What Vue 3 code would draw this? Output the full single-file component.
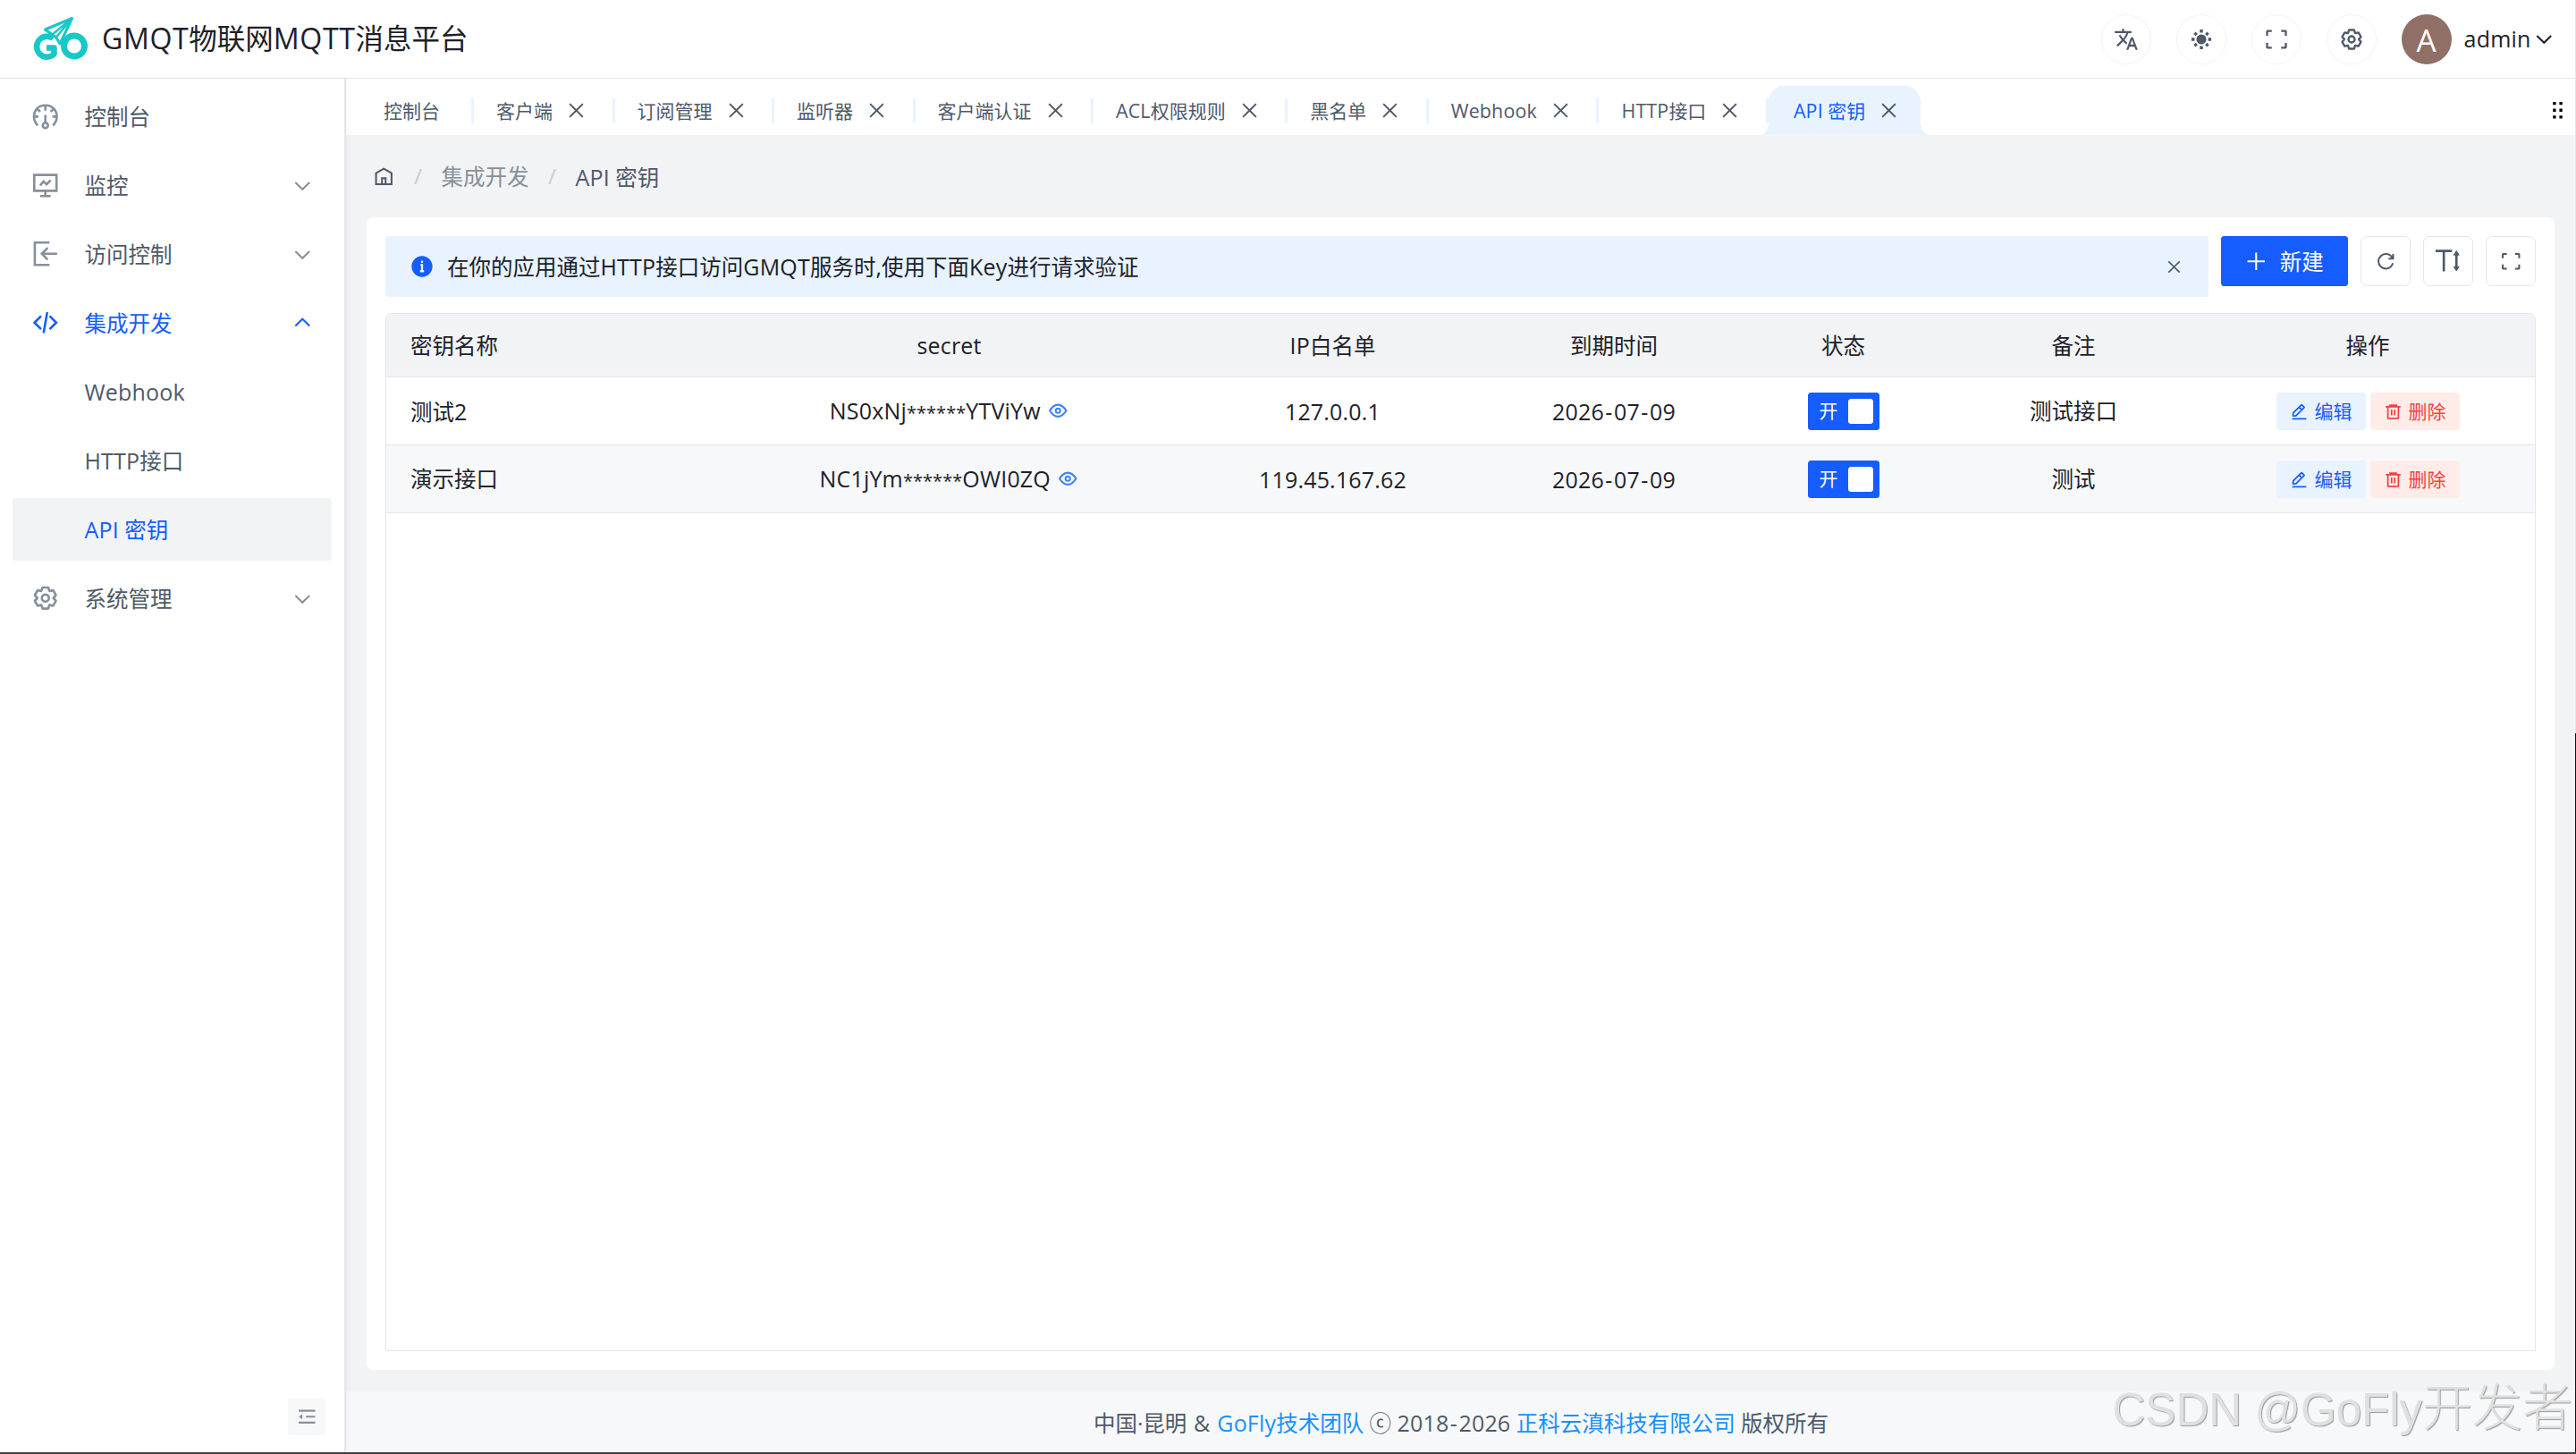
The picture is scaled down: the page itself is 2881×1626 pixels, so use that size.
<template>
  <div class="layout">
    <header class="navbar">
      <div class="brand">
        <svg class="logo" viewBox="0 0 64 52">
          <g fill="none" stroke="#16c8c8" stroke-linejoin="round">
            <path d="M23.500 25A11.500 11.500 0 1 0 24.500 42.500V35.500H16" stroke-width="6.500" />
            <circle cx="47" cy="33.500" r="11.500" stroke-width="7" />
            <path d="M14.500 15 44.500 2.500 31 31 26.500 23.500Z" fill="#fff" stroke-width="3" />
            <path d="M14.500 15 22 21 44.500 2.500 26.500 24" stroke-width="2.400" />
          </g>
        </svg>
        <h1 class="title"><Txt t="GMQT物联网MQTT消息平台" /></h1>
      </div>
      <div class="nav-right">
        <span v-for="n in ['lang', 'sun', 'full', 'gear']" :key="n" class="circle"><Icon :name="n" /></span>
        <span class="avatar">A</span>
        <span class="user"><Txt t="admin" /></span>
        <Icon name="down" class="user-arrow" />
      </div>
    </header>

    <div class="body">
      <aside class="sider">
        <div
          v-for="m in menus"
          :key="m.name"
          :class="['menu-item', { on: m.on, selected: m.selected }]"
        >
          <span class="menu-icon"><Icon v-if="m.icon" :name="m.icon" /></span>
          <span class="menu-text"><Txt :t="m.name" /></span>
          <Icon v-if="m.arrow" :name="m.arrow" class="menu-arrow" />
        </div>
        <div class="collapse"><Icon name="fold" /></div>
      </aside>

      <main class="main">
        <div class="tabs">
          <div v-for="(t, i) in tabs" :key="t" :class="['tab', { active: i === tabs.length - 1 }]">
            <span class="tab-text"><Txt :t="t" /></span>
            <Icon v-if="i" name="close" class="tab-close" />
          </div>
          <Icon name="drag" class="tabs-more" />
        </div>

        <div class="breadcrumb">
          <Icon name="home" />
          <span class="slash">/</span>
          <span class="crumb"><Txt t="集成开发" /></span>
          <span class="slash">/</span>
          <span class="crumb current"><Txt t="API 密钥" /></span>
        </div>

        <section class="card">
          <div class="toolbar">
            <div class="alert">
              <Icon name="info" class="alert-icon" />
              <span class="alert-text"><Txt t="在你的应用通过HTTP接口访问GMQT服务时,使用下面Key进行请求验证" /></span>
              <Icon name="close" class="alert-close" />
            </div>
            <button class="btn-new"><Icon name="plus" /><Txt t="新建" /></button>
            <span class="tool"><Icon name="refresh" /></span>
            <span class="tool tool-lg"><Icon name="height" /></span>
            <span class="tool"><Icon name="full" /></span>
          </div>

          <div class="table">
            <div class="tr th">
              <div v-for="c in columns" :key="c" class="td"><Txt :t="c" /></div>
            </div>
            <div v-for="(r, i) in rows" :key="r.name" :class="['tr', { stripe: i % 2 }]">
              <div class="td"><Txt :t="r.name" /></div>
              <div class="td"><Txt :t="r.secret" /><Icon name="eye" class="eye" /></div>
              <div class="td"><Txt :t="r.ip" /></div>
              <div class="td"><Txt :t="r.expire" /></div>
              <div class="td">
                <span class="switch"><span>开</span><i></i></span>
              </div>
              <div class="td"><Txt :t="r.remark" /></div>
              <div class="td">
                <span class="op edit"><Icon name="edit" />编辑</span>
                <span class="op del"><Icon name="trash" />删除</span>
              </div>
            </div>
          </div>
        </section>

        <footer class="footer">
          <span class="copy">
            <Txt t="中国·昆明 & " /><a><Txt t="GoFly技术团队" /></a>
            <Txt t=" ⓒ 2018-2026 " /><a>正科云滇科技有限公司</a> 版权所有
          </span>
        </footer>
      </main>
    </div>
    <div class="edge-right"></div>
    <div class="watermark">CSDN @GoFly<span>开发者</span></div>
  </div>
</template>

<script setup>
import { h } from "vue";

// 中西文分段，星号与连字符单独控制
const Txt = ({ t }) =>
  h(
    "span",
    { class: "txt" },
    t
      .split(/(\*+|-|[\x21-\x29\x2b\x2c\x2e-\x7e]+)/)
      .filter(Boolean)
      .map((s) => {
        if (s[0] === "*") return h("span", { class: "star" }, s);
        if (s === "-" || s === "&") return h("span", { class: "latin wide" }, s);
        return /[\x21-\x7e]/.test(s) ? h("span", { class: "latin" }, s) : s;
      })
  );
Txt.props = ["t"];

// 图标统一使用 48x48 画布
const gear =
  '<path d="M18.797 6.732A1 1 0 0 1 19.760 6h8.480a1 1 0 0 1 .964.732l1.285 4.628a1 1 0 0 0 1.213.700l4.651-1.200a1 1 0 0 1 1.116.468l4.240 7.344a1 1 0 0 1-.153 1.200L38.193 23.300a1 1 0 0 0 0 1.402l3.364 3.427a1 1 0 0 1 .153 1.200l-4.240 7.344a1 1 0 0 1-1.116.468l-4.650-1.200a1 1 0 0 0-1.214.700l-1.285 4.628a1 1 0 0 1-.964.732h-8.480a1 1 0 0 1-.963-.732L17.510 36.640a1 1 0 0 0-1.213-.700l-4.650 1.200a1 1 0 0 1-1.116-.468l-4.240-7.344a1 1 0 0 1 .153-1.200L9.809 24.700a1 1 0 0 0 0-1.402l-3.364-3.427a1 1 0 0 1-.153-1.200l4.240-7.344a1 1 0 0 1 1.116-.468l4.650 1.200a1 1 0 0 0 1.213-.700l1.286-4.628Z"/><path d="M30 24a6 6 0 1 1-12 0 6 6 0 0 1 12 0Z"/>';
const icons = {
  gear,
  lang: '<path fill="currentColor" stroke="none" d="M25.740 30.140l-5.080-5.020.060-.060A35.040 35.040 0 0 0 28.140 12H34V8H20V4h-4v4H2v4h22.340a31.500 31.500 0 0 1-6.340 10.700A31.320 31.320 0 0 1 13.380 16h-4a35.160 35.160 0 0 0 5.960 9.120L5.160 35.160 8 38l10-10 6.220 6.220 1.520-4.080zM37 20h-4l-9 24h4l2.240-6h9.500L42 44h4l-9-24zm-5.240 14L35 25.340 38.240 34h-6.480z"/>',
  sun: '<circle cx="24" cy="24" r="9.500" fill="currentColor" stroke="none"/><path fill="currentColor" stroke="none" d="M21 5h6v6h-6zM21 37h6v6h-6zM37 21h6v6h-6zM5 21h6v6h-6zM35 9.500l4 4-4 4-4-4zM13 9.500l4 4-4 4-4-4zM35 30.500l4 4-4 4-4-4zM13 30.500l4 4-4 4-4-4z"/>',
  full: '<path d="M42 17V9a1 1 0 0 0-1-1h-8M6 17V9a1 1 0 0 1 1-1h8m27 23v8a1 1 0 0 1-1 1h-8M6 31v8a1 1 0 0 0 1 1h8"/>',
  down: '<path d="M39.600 17.443 24.043 33 8.487 17.443"/>',
  up: '<path d="M39.600 30.557 24.043 15 8.487 30.557"/>',
  dash: '<path d="M11 40C2 31 3 18 10 11 17 4 31 4 38 11c7 7 8 20-1 29M24 7v8M10 11l5 6M38 11l-5 6M5 25h7M43 25h-7M24 22v14"/><circle cx="24" cy="40" r="4.500"/>',
  monitor: '<path d="M5 7h38v27H5zM24 34v9M15 43h18M15 25l6-7 5 5 7-7"/>',
  enter: '<path d="M31 5H6v38h25M44 24H19M28 14 18 24l10 10"/>',
  code: '<path d="M16.734 12.686 5.420 24l11.314 11.314m14.521-22.628L42.570 24 31.255 35.314M27.200 6.280l-6.251 35.453"/>',
  close: '<path d="M9.857 9.858 24 24m0 0 14.142 14.142M24 24 38.142 9.858M24 24 9.857 38.142"/>',
  drag: '<path fill="currentColor" stroke="none" d="M13 4h7v7h-7zM28 4h7v7h-7zM13 20h7v7h-7zM28 20h7v7h-7zM13 36h7v7h-7zM28 36h7v7h-7z"/>',
  home: '<path d="M7 17 24 7l17 10v24H7V17Z"/><path d="M20 28h8v13h-8V28Z"/>',
  info: '<path fill="currentColor" stroke="none" fill-rule="evenodd" d="M24 44c11.046 0 20-8.954 20-20S35.046 4 24 4 4 12.954 4 24s8.954 20 20 20Zm2-30a1 1 0 0 0-1-1h-2a1 1 0 0 0-1 1v2a1 1 0 0 0 1 1h2a1 1 0 0 0 1-1v-2Zm0 17h1a1 1 0 0 1 1 1v2a1 1 0 0 1-1 1h-6a1 1 0 0 1-1-1v-2a1 1 0 0 1 1-1h1v-8a1 1 0 0 1-1-1v-2a1 1 0 0 1 1-1h3a1 1 0 0 1 1 1v11Z"/>',
  plus: '<path d="M5 24h38M24 5v38"/>',
  refresh: '<path d="M38.837 18C36.463 12.136 30.715 8 24 8 15.163 8 8 15.163 8 24s7.163 16 16 16c7.455 0 13.720-5.100 15.496-12M40 8v10H30"/>',
  height: '<path d="M3 7h28M17 7v35"/><path d="M38.500 10v28"/><path d="M34 14l4.500-7 4.500 7zM34 34l4.500 7 4.500-7z" fill="currentColor" stroke-width="1.500"/>',
  eye: '<path fill-rule="evenodd" d="M24 37c6.627 0 12.627-4.333 18-13-5.373-8.667-11.373-13-18-13-6.627 0-12.627 4.333-18 13 5.373 8.667 11.373 13 18 13Z"/><path d="M29 24a5 5 0 1 1-10 0 5 5 0 0 1 10 0Z"/>',
  edit: '<path d="m30.480 19.038 5.733-5.734a1 1 0 0 0 0-1.414l-5.586-5.586a1 1 0 0 0-1.414 0l-5.734 5.734m7 7L15.763 33.754a1 1 0 0 1-.590.286l-6.048.708a1 1 0 0 1-1.113-1.069l.477-6.310a1 1 0 0 1 .290-.631l14.700-14.700m7 7-7-7M6 42h36"/>',
  trash: '<path d="M5 11h5.500m0 0v29a1 1 0 0 0 1 1h25a1 1 0 0 0 1-1V11m-27 0H16m21.500 0H43m-5.500 0H32m-16 0V7h16v4m-16 0h16M20 18v15M28 18v15"/>',
  fold: '<path d="M42 11H6M42 24H22M42 37H6"/><path d="M13 20v8l-5-4z" fill="currentColor" stroke-width="2"/>',
};
const Icon = ({ name }) =>
  h("svg", {
    class: ["icon", "icon-" + name],
    viewBox: "0 0 48 48",
    fill: "none",
    stroke: "currentColor",
    "stroke-width": 4,
    innerHTML: icons[name],
  });
Icon.props = ["name"];

const menus = [
  { name: "控制台", icon: "dash" },
  { name: "监控", icon: "monitor", arrow: "down" },
  { name: "访问控制", icon: "enter", arrow: "down" },
  { name: "集成开发", icon: "code", arrow: "up", on: true },
  { name: "Webhook" },
  { name: "HTTP接口" },
  { name: "API 密钥", selected: true },
  { name: "系统管理", icon: "gear", arrow: "down" },
];

const tabs = [
  "控制台",
  "客户端",
  "订阅管理",
  "监听器",
  "客户端认证",
  "ACL权限规则",
  "黑名单",
  "Webhook",
  "HTTP接口",
  "API 密钥",
];

const columns = ["密钥名称", "secret", "IP白名单", "到期时间", "状态", "备注", "操作"];

const rows = [
  { name: "测试2", secret: "NS0xNj******YTViYw", ip: "127.0.0.1", expire: "2026-07-09", remark: "测试接口" },
  { name: "演示接口", secret: "NC1jYm******OWI0ZQ", ip: "119.45.167.62", expire: "2026-07-09", remark: "测试" },
];
</script>

<style>
body {
  background: #f2f3f5;
}
.txt {
  display: inline-block;
  padding-top: 2px;
  white-space: pre;
}
.latin {
  font-size: 1.02em;
  font-kerning: none;
  letter-spacing: 0.008em;
}
.star {
  font-size: 0.82em;
}
.wide {
  padding: 0 1.4px;
}
.icon {
  display: block;
  flex: none;
  width: 1em;
  height: 1em;
}
</style>

<style scoped>
.layout {
  position: relative;
  display: flex;
  flex-direction: column;
  box-sizing: border-box;
  width: 2881px;
  height: 1626px;
  overflow: hidden;
  border-bottom: 2px solid #414143;
  font-family: "Open Sans", "Noto Sans CJK SC", sans-serif;
  font-size: 24.5px;
  line-height: 38.5px;
  color: #1d2129;
  background: #f2f3f5;
}
.layout * {
  box-sizing: border-box;
}

/* 顶部 */
.navbar {
  display: flex;
  justify-content: space-between;
  flex: none;
  height: 88px;
  background: #fff;
  border-bottom: 1px solid #e5e6eb;
}
.brand {
  display: flex;
  align-items: center;
  padding-left: 36px;
}
.logo {
  width: 64px;
  height: 52px;
}
.title {
  margin: 0 0 0 14px;
  font-size: 31.5px;
  font-weight: 400;
  white-space: nowrap;
}
.title :deep(.txt) {
  padding-top: 0;
}
.title :deep(.latin) {
  letter-spacing: 0.6px;
}
.nav-right {
  display: flex;
  align-items: center;
  padding-right: 24px;
}
.circle {
  display: flex;
  align-items: center;
  justify-content: center;
  width: 56px;
  height: 56px;
  margin-right: 28px;
  border: 1px solid #f2f3f5;
  border-radius: 50%;
  font-size: 28px;
  color: #4e5969;
}
.avatar {
  width: 56px;
  height: 56px;
  border-radius: 50%;
  background: #8f6f66;
  color: #fff;
  font-size: 35px;
  line-height: 57px;
  text-align: center;
}
.user {
  margin-left: 14px;
}
.user :deep(.txt) {
  padding-top: 0;
}
.user-arrow {
  margin-left: 2px;
}

.body {
  display: flex;
  flex: 1;
  min-height: 0;
}

/* 侧边菜单 */
.sider {
  display: flex;
  flex-direction: column;
  gap: 7px;
  z-index: 1;
  width: 387px;
  padding: 7px 14px;
  background: #fff;
  border-right: 2px solid #e5e6eb;
  box-shadow: 2px 0 6px rgba(0, 0, 0, 0.04);
}
.menu-item {
  display: flex;
  align-items: center;
  height: 70px;
  padding: 0 21px;
  border-radius: 3.5px;
  color: #4e5969;
}
.menu-icon {
  width: 59.5px;
  font-size: 31.5px;
  color: #86909c;
}
.menu-text {
  flex: 1;
}
.menu-arrow {
  color: #86909c;
}
.on,
.on .menu-icon,
.on .menu-arrow,
.selected {
  color: #165dff;
}
.selected {
  background: #f2f3f5;
}
.collapse {
  display: flex;
  align-items: center;
  justify-content: center;
  align-self: flex-end;
  width: 42px;
  height: 42px;
  margin: auto 7px 12px 0;
  border-radius: 3.5px;
  background: #f7f8fa;
  color: #86909c;
}

.main {
  display: flex;
  flex-direction: column;
  flex: 1;
  min-width: 0;
}

/* 页签 */
.tabs {
  display: flex;
  align-items: flex-end;
  height: 63px;
  padding-left: 17px;
  background: #fff;
}
.tab {
  position: relative;
  display: flex;
  align-items: center;
  height: 55px;
  padding: 0 27.5px 0 25px;
  font-size: 21px;
  color: #4e5969;
}
.tab:first-child {
  padding-right: 38px;
}
.tab::after {
  content: "";
  position: absolute;
  right: 0;
  top: 14px;
  width: 3px;
  height: 28px;
  background: #e8f3ff;
}
.tab-close {
  margin-left: 14px;
  margin-right: 3px;
  font-size: 25px;
  stroke-width: 3.6;
}
.tab.active {
  padding-left: 28px;
  padding-right: 20px;
  color: #165dff;
  background: #e8f3ff;
  border-radius: 18px 18px 0 0;
}
.active .tab-close {
  color: #4e5969;
}
.tab.active::before,
.tab.active::after {
  content: "";
  position: absolute;
  top: auto;
  bottom: 0;
  width: 10px;
  height: 14px;
}
.tab.active::before {
  left: -10px;
  background: radial-gradient(ellipse 10px 14px at 0 0, transparent 98%, #e8f3ff);
}
.tab.active::after {
  right: -10px;
  background: radial-gradient(ellipse 10px 14px at 100% 0, transparent 98%, #e8f3ff);
}
.tabs-more {
  margin: 0 9px 16px auto;
  font-size: 23px;
  color: #000;
}

/* 面包屑 */
.breadcrumb {
  display: flex;
  align-items: center;
  height: 93px;
  margin-bottom: -1px;
  padding-left: 30px;
  color: #4e5969;
}
.slash {
  width: 52px;
  text-align: center;
  color: #c9cdd4;
}
.breadcrumb .icon {
  width: 24.5px;
}
.crumb {
  color: #86909c;
}
.current {
  color: #4e5969;
}

/* 内容卡片 */
.card {
  display: flex;
  flex-direction: column;
  height: 1289px;
  margin: 0 24px 0 23px;
  padding: 21px;
  border-radius: 7px;
  background: #fff;
}
.toolbar {
  display: flex;
  gap: 14px;
}
.alert {
  display: flex;
  align-items: center;
  flex: 1;
  height: 68px;
  padding: 0 28px 0 27px;
  border-radius: 3.5px;
  background: #e8f3ff;
}
.alert-icon {
  font-size: 28px;
  color: #165dff;
}
.alert-text {
  flex: 1;
  margin-left: 14px;
}
.alert-close {
  font-size: 21px;
  color: #4e5969;
}
.btn-new {
  display: flex;
  align-items: center;
  justify-content: center;
  gap: 14px;
  width: 142px;
  height: 56px;
  padding: 0;
  border: 0;
  border-radius: 3.5px;
  background: #165dff;
  color: #fff;
  font: inherit;
}
.tool {
  display: flex;
  align-items: center;
  justify-content: center;
  width: 56px;
  height: 56px;
  border: 1px solid #e5e6eb;
  border-radius: 7px;
  color: #4e5969;
}
.tool-lg {
  font-size: 31.5px;
}

/* 表格 */
.table {
  flex: 1;
  margin-top: 18px;
  border: 1px solid #e5e6eb;
  border-radius: 7px 7px 0 0;
  overflow: hidden;
}
.tr {
  display: grid;
  grid-template-columns: 374px 511px 347px 282px 231px 284px 1fr;
  height: 76px;
  border-bottom: 1px solid #e5e6eb;
}
.th {
  height: 71px;
  background: #f2f3f5;
}
.stripe {
  background: #f7f8fa;
}
.td {
  display: flex;
  align-items: center;
  justify-content: center;
}
.td:first-child {
  justify-content: flex-start;
  padding-left: 27px;
}
.eye {
  margin-left: 7px;
  color: #4080ff;
}
.switch {
  display: flex;
  align-items: center;
  justify-content: space-between;
  width: 80px;
  height: 42px;
  padding: 0 7px 0 13px;
  border-radius: 3.5px;
  background: #165dff;
  color: #fff;
  font-size: 21px;
}
.switch i {
  width: 28px;
  height: 28px;
  border-radius: 3.5px;
  background: #fff;
}
.op {
  display: flex;
  align-items: center;
  justify-content: center;
  gap: 7px;
  width: 100px;
  height: 42px;
  padding-top: 1px;
  border-radius: 3.5px;
  font-size: 21px;
}
.edit {
  margin-right: 5px;
  color: #165dff;
  background: #e8f3ff;
}
.del {
  color: #f53f3f;
  background: #ffece8;
}

/* 页脚 */
.footer {
  display: flex;
  align-items: center;
  justify-content: center;
  flex: none;
  height: 68px;
  margin-top: 24px;
  padding-top: 2px;
  background: #f7f8fa;
  color: #4e5969;
}
.copy {
  white-space: nowrap;
}
.copy a {
  color: #1890ff;
}

.edge-right {
  position: absolute;
  right: 0;
  top: 0;
  width: 1px;
  height: 100%;
  background: linear-gradient(#e5e6eb 820px, #111 820px);
}
.watermark {
  position: absolute;
  right: 4px;
  bottom: 11px;
  z-index: 2;
  font-family: "Liberation Sans", "Noto Sans CJK SC", sans-serif;
  font-weight: 300;
  font-size: 51px;
  line-height: 72px;
  color: #e0e0e0;
  text-shadow: 1px 1px 1px #999;
  white-space: nowrap;
}
.watermark span {
  font-size: 56px;
}
</style>
